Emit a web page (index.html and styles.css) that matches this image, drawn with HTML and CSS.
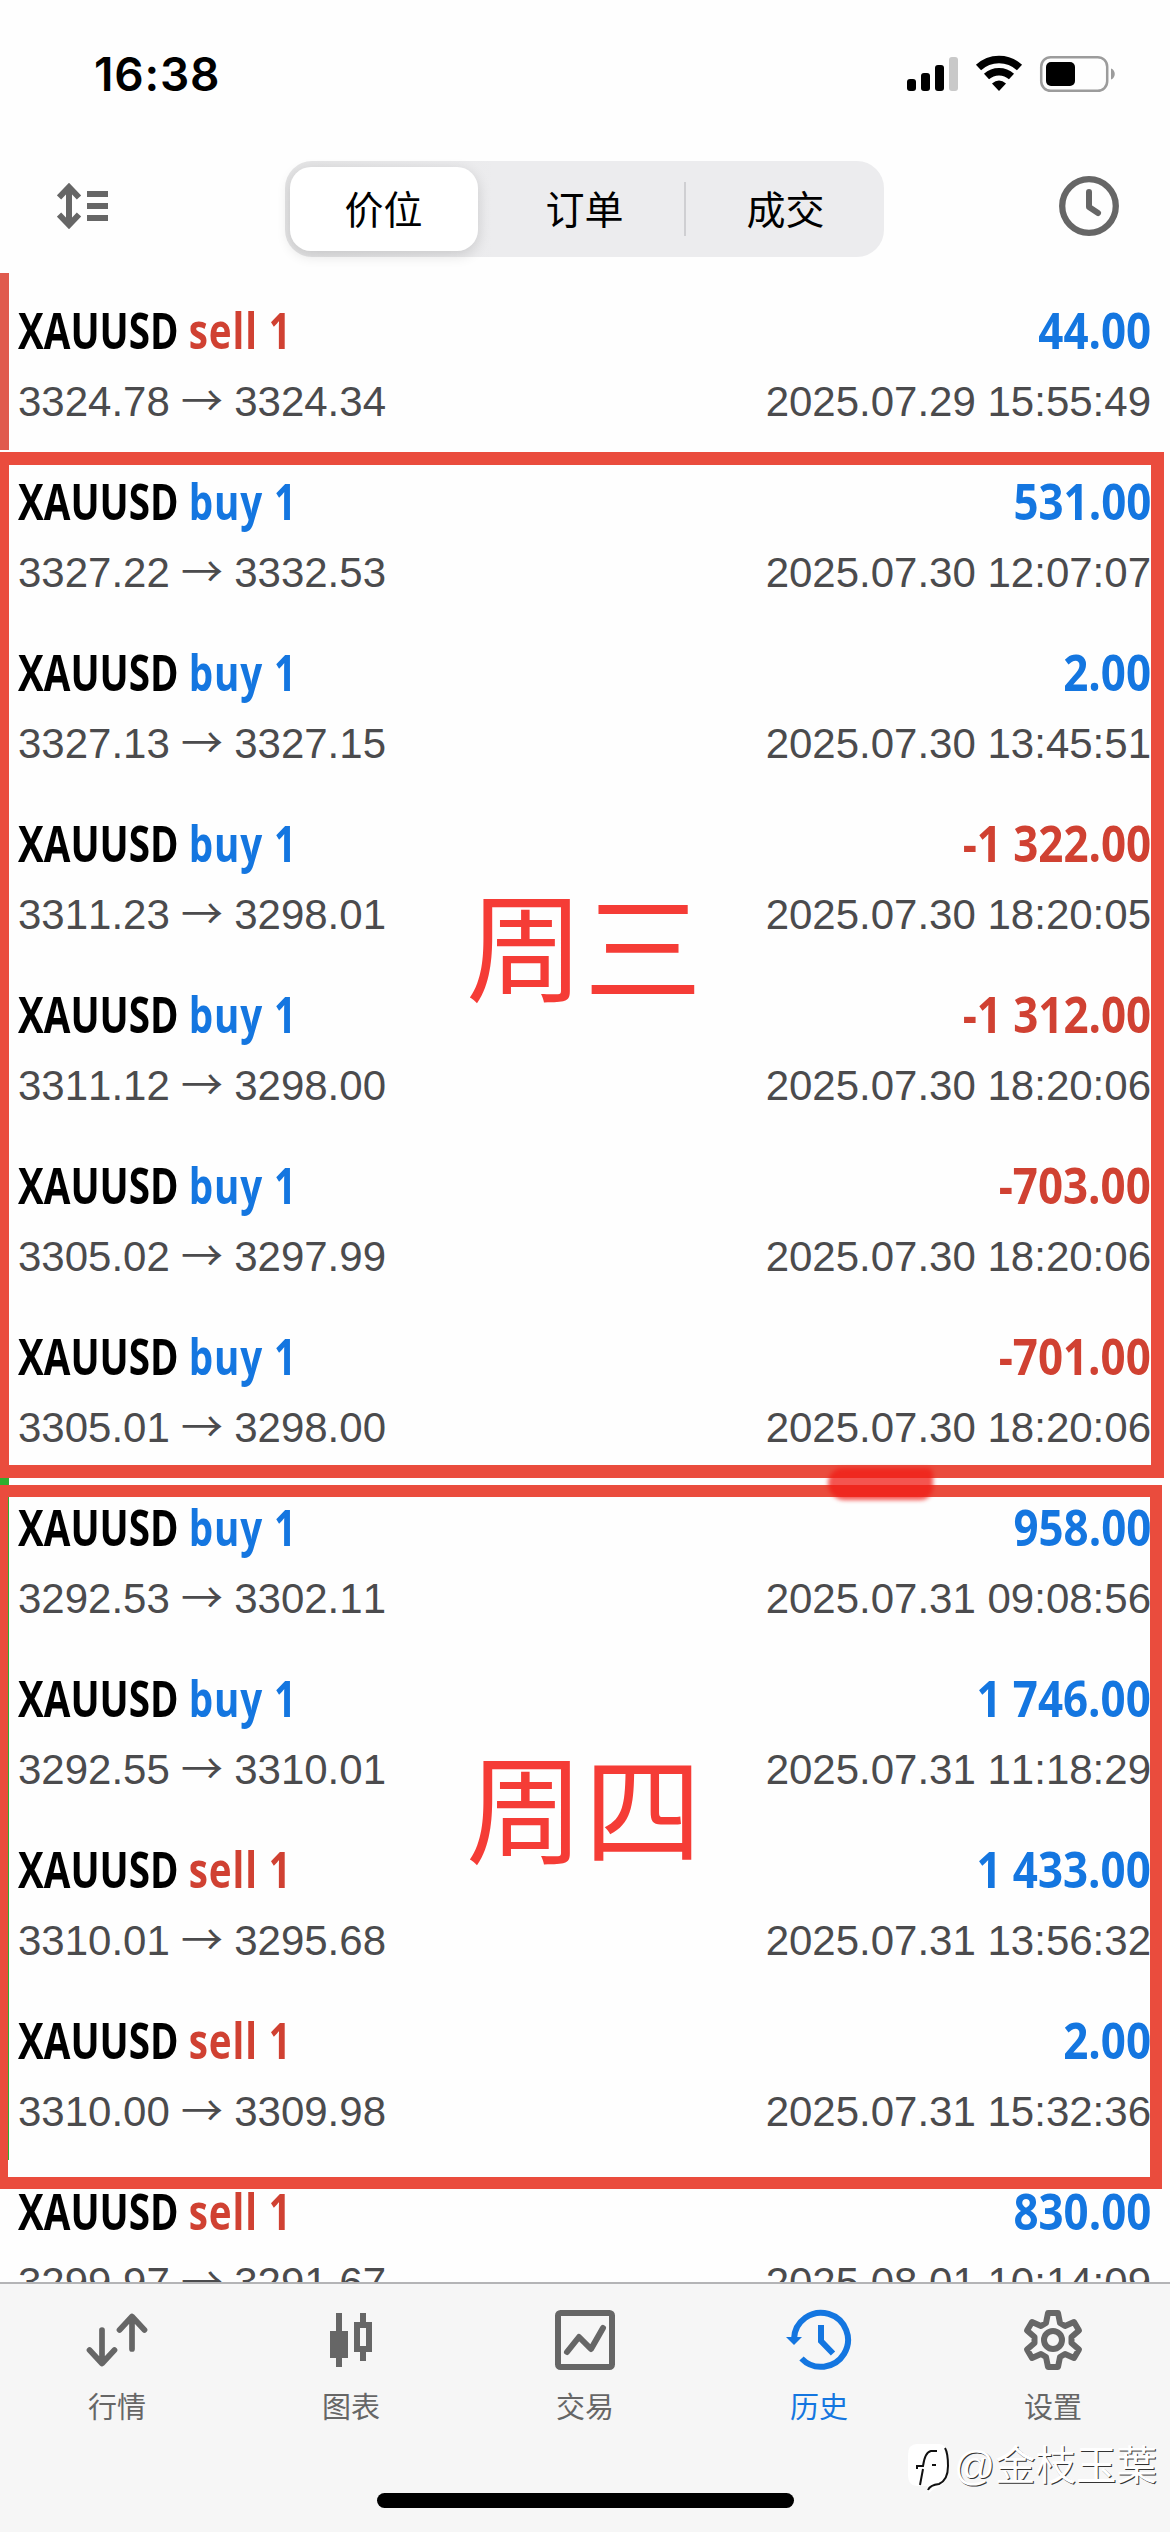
FILE: index.html
```html
<!DOCTYPE html>
<html lang="zh-CN">
<head>
<meta charset="utf-8">
<title>历史</title>
<link rel="stylesheet" href="styles.css">
</head>
<body>
<div class="screen">
  <header class="status">
    <span class="time">16:38</span>
    <svg class="status-icons" width="208" height="40" viewBox="907 54 208 40">
      <rect x="907" y="79" width="9" height="12" rx="3"/>
      <rect x="921" y="73" width="9" height="18" rx="3"/>
      <rect x="935" y="65" width="9" height="26" rx="3"/>
      <rect x="949" y="57" width="9" height="34" rx="3" fill="#c9c9c9"/>
      <path d="M978.500 67.500A30 30 0 0 1 1019.500 67.500M986.500 76.500A18.500 18.500 0 0 1 1011.500 76.500" fill="none" stroke="#000" stroke-width="7.500"/>
      <path d="M992 83.500Q999 77.500 1006 83.500L999 91Z"/>
      <rect x="1041.200" y="57.200" width="66" height="33.600" rx="9.500" fill="none" stroke="#9c9c9c" stroke-width="2.500"/>
      <rect x="1046" y="62" width="29" height="24" rx="5"/>
      <path d="M1111 68.500C1116 70 1116 78 1111 79.500Z" fill="#9c9c9c"/>
    </svg>
  </header>

  <nav class="toolbar">
    <svg width="52" height="48" viewBox="57 182 52 48" fill="none" stroke="#666">
      <path d="M69 187V225M59 197.500L69 187L79 197.500M59 214.500L69 225L79 214.500" stroke-width="6"/>
      <path d="M87 194H108M87 206H108M87 218H108" stroke-width="6"/>
    </svg>
    <div class="segments">
      <span class="segment active">价位</span>
      <span class="segment middle">订单</span>
      <span class="segment last">成交</span>
    </div>
    <svg width="60" height="60" viewBox="0 0 60 60" fill="none" stroke="#666" stroke-width="6.300">
      <circle cx="30" cy="30" r="26.800"/>
      <path d="M30 16V31L39 37" stroke-width="6" stroke-linecap="round" stroke-linejoin="round"/>
    </svg>
  </nav>

  <main class="deals">
    <article class="deal loss"><div class="line"><b class="name">XAUUSD <i class="sell">sell 1</i></b><b class="sum">44.00</b></div><div class="line info"><span>3324.78 <em>→</em> 3324.34</span><time>2025.07.29 15:55:49</time></div></article>
    <article class="deal"><div class="line"><b class="name">XAUUSD <i>buy 1</i></b><b class="sum">531.00</b></div><div class="line info"><span>3327.22 <em>→</em> 3332.53</span><time>2025.07.30 12:07:07</time></div></article>
    <article class="deal"><div class="line"><b class="name">XAUUSD <i>buy 1</i></b><b class="sum">2.00</b></div><div class="line info"><span>3327.13 <em>→</em> 3327.15</span><time>2025.07.30 13:45:51</time></div></article>
    <article class="deal"><div class="line"><b class="name">XAUUSD <i>buy 1</i></b><b class="sum minus">-1 322.00</b></div><div class="line info"><span>3311.23 <em>→</em> 3298.01</span><time>2025.07.30 18:20:05</time></div></article>
    <article class="deal"><div class="line"><b class="name">XAUUSD <i>buy 1</i></b><b class="sum minus">-1 312.00</b></div><div class="line info"><span>3311.12 <em>→</em> 3298.00</span><time>2025.07.30 18:20:06</time></div></article>
    <article class="deal"><div class="line"><b class="name">XAUUSD <i>buy 1</i></b><b class="sum minus">-703.00</b></div><div class="line info"><span>3305.02 <em>→</em> 3297.99</span><time>2025.07.30 18:20:06</time></div></article>
    <article class="deal"><div class="line"><b class="name">XAUUSD <i>buy 1</i></b><b class="sum minus">-701.00</b></div><div class="line info"><span>3305.01 <em>→</em> 3298.00</span><time>2025.07.30 18:20:06</time></div></article>
    <article class="deal profit"><div class="line"><b class="name">XAUUSD <i>buy 1</i></b><b class="sum">958.00</b></div><div class="line info"><span>3292.53 <em>→</em> 3302.11</span><time>2025.07.31 09:08:56</time></div></article>
    <article class="deal profit"><div class="line"><b class="name">XAUUSD <i>buy 1</i></b><b class="sum">1 746.00</b></div><div class="line info"><span>3292.55 <em>→</em> 3310.01</span><time>2025.07.31 11:18:29</time></div></article>
    <article class="deal profit"><div class="line"><b class="name">XAUUSD <i class="sell">sell 1</i></b><b class="sum">1 433.00</b></div><div class="line info"><span>3310.01 <em>→</em> 3295.68</span><time>2025.07.31 13:56:32</time></div></article>
    <article class="deal profit"><div class="line"><b class="name">XAUUSD <i class="sell">sell 1</i></b><b class="sum">2.00</b></div><div class="line info"><span>3310.00 <em>→</em> 3309.98</span><time>2025.07.31 15:32:36</time></div></article>
    <article class="deal"><div class="line"><b class="name">XAUUSD <i class="sell">sell 1</i></b><b class="sum">830.00</b></div><div class="line info"><span>3299.97 <em>→</em> 3291.67</span><time>2025.08.01 10:14:09</time></div></article>
  </main>

  <footer class="tabbar">
    <div class="tabs">
      <div class="tab"><svg width="64" height="64" viewBox="85 2308 64 64" fill="none" stroke="#666" stroke-width="5.700" stroke-linecap="round" stroke-linejoin="round"><path d="M102 2330V2363M89.500 2350L102 2363.500L114.500 2350M132 2349V2317M119.500 2330L132 2316.500L144.500 2330"/></svg><span>行情</span></div>
      <div class="tab"><svg width="64" height="64" viewBox="319 2308 64 64" fill="#666"><path d="M336 2313h6v18h6v27h-6v9h-6v-9h-6v-27h6zM360 2313h6v9h6v30h-6v9h-6v-9h-6v-30h6zM360 2328v18h6v-18z" fill-rule="evenodd"/></svg><span>图表</span></div>
      <div class="tab"><svg width="64" height="64" viewBox="553 2308 64 64" fill="none" stroke="#666" stroke-width="6" stroke-linejoin="round"><rect x="558" y="2313" width="54" height="54" rx="2.500"/><path d="M567 2352L579 2337L591 2349L603 2328" stroke-linecap="round"/></svg><span>交易</span></div>
      <div class="tab current"><svg width="68" height="64" viewBox="783 2308 68 64" fill="none" stroke="#1476e0" stroke-width="6"><path d="M792 2339A27 27 0 1 1 799.500 2358.500M819 2325V2341L831 2353.500"/><path d="M784 2337H800L792 2345Z" fill="#1476e0" stroke="none"/></svg><span>历史</span></div>
      <div class="tab"><svg width="64" height="64" viewBox="-32 -32 64 64" fill="none" stroke="#666" stroke-width="6" stroke-linejoin="round"><circle r="9"/><path d="M-5 -27H5L7 -17L12 -14L21 -18L26 -9.500L18.500 -3V3L26 9.500L21 18L12 14L7 17L5 27H-5L-7 17L-12 14L-21 18L-26 9.500L-18.500 3V-3L-26 -9.500L-21 -18L-12 -14L-7 -17Z"/></svg><span>设置</span></div>
    </div>
    <div class="home-bar"></div>
  </footer>

  <div class="mark box-wed"></div>
  <div class="mark box-thu"></div>
  <div class="mark smear"></div>
  <div class="mark day wed">周三</div>
  <div class="mark day thu">周四</div>
  <div class="mark watermark"><svg width="44" height="52" viewBox="0 0 44 52"><path d="M10 1H32Q40 1 40 12V30Q40 41 27 46L22 50L20 43H10Q1 43 1 32V12Q1 1 10 1Z" fill="#fff"/><path d="M38 5Q41 10 41 23Q41 37 32 41Q23 42 21 47M13 42L16 26M10 26V23H16Q18 9 24 8H30M25 22H29" fill="none" stroke="#111" stroke-width="2"/></svg><span>@金枝玉葉</span></div>
</div>
</body>
</html>
```
FILE: styles.css
```css
* { box-sizing: border-box; }
body {
  margin: 0;
  background: #fff;
  font-family: "Liberation Sans", "Noto Sans CJK SC", sans-serif;
}
.screen {
  position: relative;
  width: 1170px;
  height: 2532px;
  overflow: hidden;
  display: flex;
  flex-direction: column;
  background: #fefefe;
}
svg { display: block; flex: none; }

.status {
  height: 150px;
  padding: 0 55px 2px 94px;
  display: flex;
  align-items: center;
  justify-content: space-between;
}
.time { font: 600 46px/60px Inter, sans-serif; letter-spacing: .8px; }

.toolbar {
  height: 123px;
  padding: 0 51px 5px 57px;
  display: flex;
  align-items: center;
  justify-content: space-between;
}
.toolbar > svg { position: relative; top: -3px; }
.segments {
  width: 599px;
  height: 96px;
  padding: 6px 0 6px 5px;
  display: flex;
  border-radius: 27px;
  background: linear-gradient(90deg, #e4e4e5, #ececee 35%);
}
.segment {
  display: flex;
  align-items: center;
  justify-content: center;
  width: 206px;
  padding-bottom: 4px;
  font-size: 39px;
  position: relative;
}
.segment.active {
  width: 188px;
  border-radius: 21px;
  background: #fff;
  box-shadow: 0 4px 14px rgba(0, 0, 0, .14);
}
.segment.middle { padding-left: 8px; }
.segment.last { width: 200px; padding-left: 4px; }
.segment.last::before {
  content: "";
  position: absolute;
  left: 0;
  top: 15px;
  width: 2px;
  height: 54px;
  background: #cfcfd2;
}

.deals {
  height: 2009px;
  overflow: hidden;
}
.deal {
  height: 171px;
  padding: 15px 19px 0 9px;
  border-left: 9px solid transparent;
}
.deal.loss { height: 177px; padding-top: 21px; border-left-color: #e05a4d; }
.deal.profit { border-left-color: #2fae2f; }
.line {
  display: flex;
  justify-content: space-between;
  white-space: nowrap;
}
.name, .sum {
  font: 700 51px/70px "Open Sans", sans-serif;
  color: #1476e0;
}
.name { transform: scaleX(.757); transform-origin: left; color: #000; }
.name i { font-style: normal; color: #1476e0; letter-spacing: 1.2px; }
.name .sell, .sum.minus { color: #d04132; }
.sum { transform: scaleX(.86); transform-origin: right; }
.info {
  padding-top: 14px;
  font-size: 42px;
  line-height: 48px;
  font-kerning: none;
  color: #4b4b4d;
}
.info em { font: 42px/40px "Noto Sans CJK SC", sans-serif; margin: 0 -.5px; }

.tabbar {
  height: 250px;
  border-top: 2px solid #b4b4b6;
  background: #f6f6f6;
  display: flex;
  flex-direction: column;
  align-items: center;
}
.tabs { display: flex; width: 100%; height: 209px; padding-top: 24px; }
.tab {
  width: 234px;
  display: flex;
  flex-direction: column;
  align-items: center;
  gap: 16px;
  font-size: 29px;
  line-height: 40px;
  color: #666;
}
.tab.current { color: #1476e0; }
.home-bar { width: 417px; height: 15px; border-radius: 8px; background: #000; }

/* Hand-drawn annotations lying over the list */
.mark { position: absolute; }
.box-wed { left: -4px; top: 452px; width: 1168px; height: 1026px; border: 13px solid #ea4c3d; }
.box-thu { left: -5px; top: 1485px; width: 1167px; height: 704px; border: 12.500px solid #ea4c3d; border-left-width: 13px; }
.smear {
  left: 828px;
  top: 1468px;
  width: 105px;
  height: 32px;
  border-radius: 16px 6px 14px 18px;
  background: rgba(240, 28, 22, .75);
  filter: blur(2px);
}
.day { left: 466px; font-size: 118px; line-height: 140px; color: #f53c36; white-space: nowrap; }
.wed { top: 882px; }
.thu { top: 1744px; }
.watermark {
  left: 907px;
  top: 2433px;
  display: flex;
  align-items: center;
  gap: 3px;
  font-size: 40.500px;
  color: #fff;
  text-shadow: 1px 1px 0 #333;
  white-space: nowrap;
}
.watermark svg { position: relative; top: 6px; }
```
